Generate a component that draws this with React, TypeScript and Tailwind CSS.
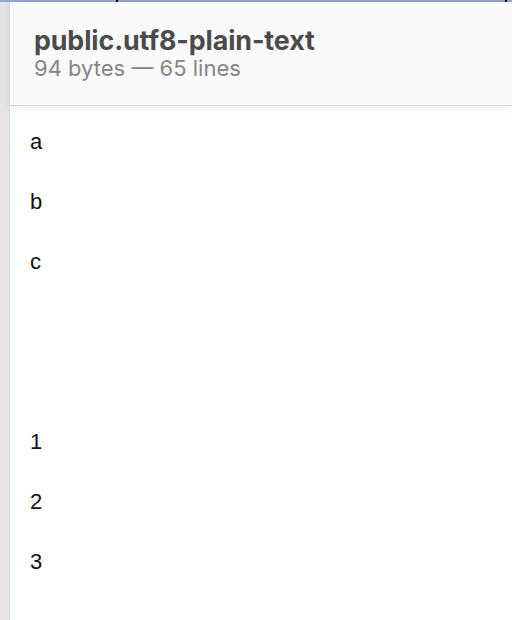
const LINES = ['a', 'b', 'c', '', '', '1', '2', '3', '', ''];

export default function App() {
  return (
    <div className="w-[512px] h-[620px] overflow-hidden flex flex-col bg-white">
      {/* window edge above the panel */}
      <div className="relative h-[2px] shrink-0 bg-[#95a8c8]">
        <span className="absolute left-[116px] top-0 w-[2px] h-[3px] bg-black" />
        <span className="absolute left-[505px] top-0 w-[2px] h-[2px] bg-black" />
      </div>
      <div className="flex flex-1 min-h-0">
        <div className="w-[10px] shrink-0 bg-[#e8e3e8] border-r border-[#dcd8dc]" />
        <div className="flex-1 flex flex-col min-w-0">
          <header className="relative z-10 h-[104px] shrink-0 bg-[#fafafa] border-b border-[#d9d9d9] shadow-[0_2px_8px_rgba(0,0,0,0.08)] pl-[24px] pt-[22px] font-['Inter',sans-serif]">
            <h1 className="text-[26.8px] leading-[32px] font-bold text-[#4b4b4b] tracking-[-0.1px]">public.utf8-plain-text</h1>
            <p className="text-[22px] leading-[24px] text-[#858585]">94 bytes — 65 lines</p>
          </header>
          <div className="flex-1 pl-[20px] pt-[20px] font-['Liberation_Sans',Arial,sans-serif] text-[22px] text-[#111]">
            {LINES.map((line, i) => (
              <div key={i} className="h-[60px] leading-[32px]">
                {line}
              </div>
            ))}
          </div>
        </div>
      </div>
    </div>
  );
}
